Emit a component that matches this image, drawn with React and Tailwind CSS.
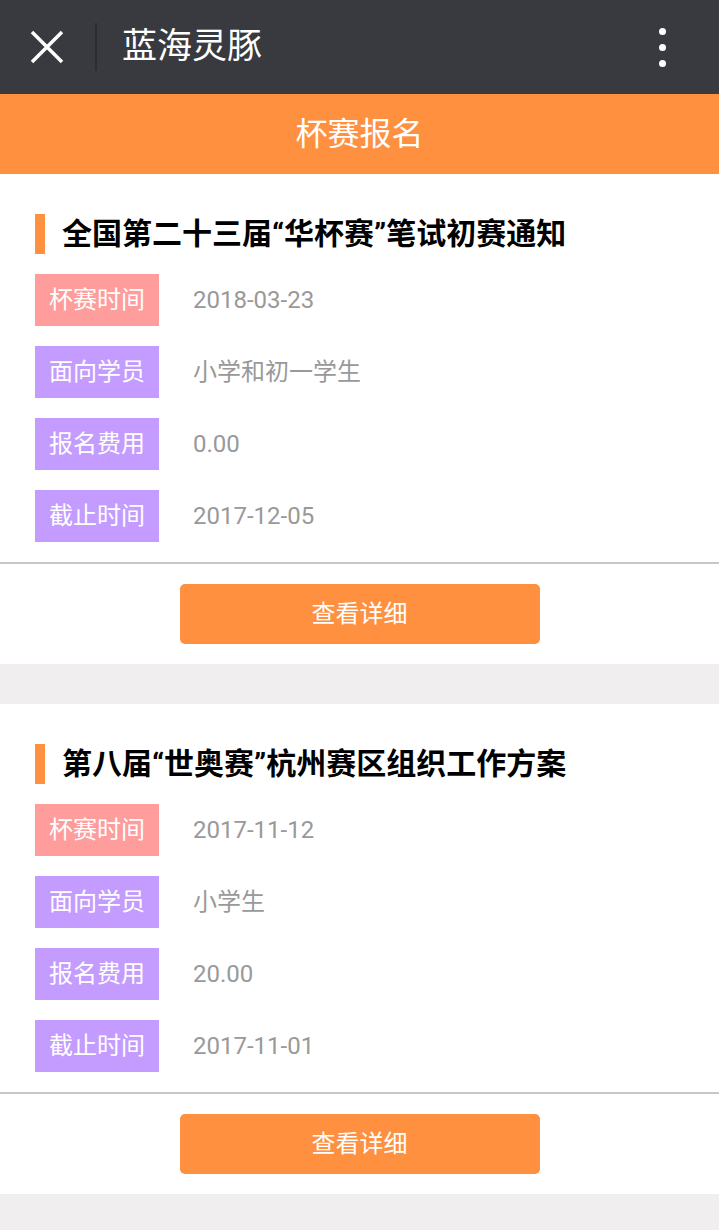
const CUPS = [
  {
    title: '全国第二十三届“华杯赛”笔试初赛通知',
    date: '2018-03-23',
    target: '小学和初一学生',
    fee: '0.00',
    deadline: '2017-12-05',
  },
  {
    title: '第八届“世奥赛”杭州赛区组织工作方案',
    date: '2017-11-12',
    target: '小学生',
    fee: '20.00',
    deadline: '2017-11-01',
  },
]

const FONT = 'font-["Roboto","Noto_Sans_CJK_SC",sans-serif]'

function Row({ label, value, tone }) {
  return (
    <div className="flex items-center">
      <span
        className={`w-[124px] h-[52px] flex items-center justify-center text-white text-[24px] ${
          tone === 'pink' ? 'bg-[#ff9c9c]' : 'bg-[#c49cff]'
        }`}
      >
        {label}
      </span>
      <span className="ml-[34px] text-[24px] text-[#999999]">{value}</span>
    </div>
  )
}

function CupCard({ cup }) {
  return (
    <section className="bg-white">
      <div className="px-[35px] pt-10 pb-5 flex flex-col gap-5">
        <div className="flex items-center h-10">
          <span className="w-[10px] h-10 bg-[#ff9040]" />
          <h2 className="ml-[17px] text-[30px] leading-none font-bold text-black">
            {cup.title}
          </h2>
        </div>
        <Row label="杯赛时间" value={cup.date} tone="pink" />
        <Row label="面向学员" value={cup.target} />
        <Row label="报名费用" value={cup.fee} />
        <Row label="截止时间" value={cup.deadline} />
      </div>
      <div className="h-[2px] bg-[#c8c8c8]" />
      <div className="py-5 flex justify-center">
        <button
          type="button"
          className="w-[360px] h-[60px] rounded-[5px] bg-[#ff9040] text-white text-[24px]"
        >
          查看详细
        </button>
      </div>
    </section>
  )
}

export default function App() {
  return (
    <div className={`w-[719px] min-h-[1230px] bg-[#f0eeee] ${FONT}`}>
      <header className="h-[94px] bg-[#393a3f] flex items-center">
        <svg width="34" height="34" viewBox="0 0 34 34" className="ml-[30px]">
          <path d="M2 2 L32 32 M32 2 L2 32" stroke="white" strokeWidth="3.5" />
        </svg>
        <span className="ml-[31px] w-[2px] h-12 bg-[#2c2d31]" />
        <span className="ml-[25px] text-white text-[35px]">蓝海灵豚</span>
        <span className="ml-auto mr-[53px] flex flex-col gap-[9px]">
          <span className="w-[7px] h-[7px] rounded-full bg-white" />
          <span className="w-[7px] h-[7px] rounded-full bg-white" />
          <span className="w-[7px] h-[7px] rounded-full bg-white" />
        </span>
      </header>
      <div className="h-[80px] bg-[#ff9040] flex items-center justify-center text-white text-[32px]">
        杯赛报名
      </div>
      <div className="flex flex-col gap-10">
        {CUPS.map((c) => (
          <CupCard key={c.title} cup={c} />
        ))}
      </div>
    </div>
  )
}
